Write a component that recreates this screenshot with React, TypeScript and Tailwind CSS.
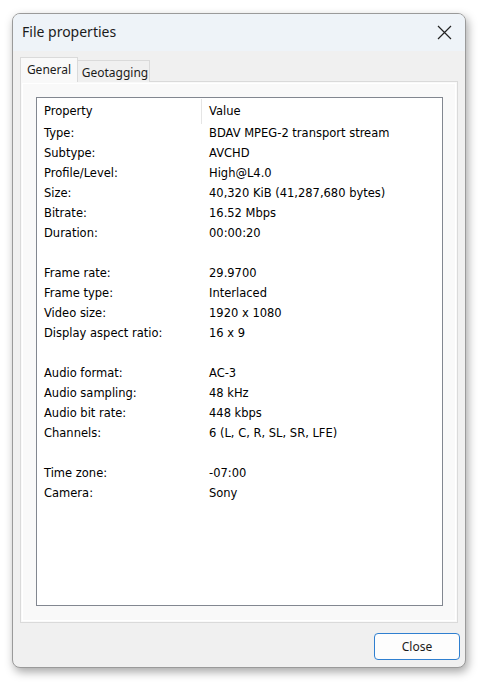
import React from "react";

const rows: ([string, string] | null)[] = [
  ["Type:", "BDAV MPEG-2 transport stream"],
  ["Subtype:", "AVCHD"],
  ["Profile/Level:", "High@L4.0"],
  ["Size:", "40,320 KiB (41,287,680 bytes)"],
  ["Bitrate:", "16.52 Mbps"],
  ["Duration:", "00:00:20"],
  null,
  ["Frame rate:", "29.9700"],
  ["Frame type:", "Interlaced"],
  ["Video size:", "1920 x 1080"],
  ["Display aspect ratio:", "16 x 9"],
  null,
  ["Audio format:", "AC-3"],
  ["Audio sampling:", "48 kHz"],
  ["Audio bit rate:", "448 kbps"],
  ["Channels:", "6 (L, C, R, SL, SR, LFE)"],
  null,
  ["Time zone:", "-07:00"],
  ["Camera:", "Sony"],
];

export default function App() {
  return (
    <div className="w-[485px] h-[688px] bg-white pt-[13px] pl-[12px]">
      <div className="w-[454px] h-[655px] rounded-[8px] border border-[#9a9a9a] bg-[#f0f0f0] shadow-[2px_4px_10px_rgba(0,0,0,0.35)] flex flex-col overflow-hidden">
        {/* title bar */}
        <div className="h-[37px] bg-[#eef3f8] flex items-center justify-between pl-[9px] pr-[13px] shrink-0">
          <span className="text-[14px] text-[#1b1b1b] font-['Noto_Sans',sans-serif] leading-none -mt-[2px]">File properties</span>
          <svg width="15" height="15" viewBox="0 0 15 15" className="-mt-[1px]">
            <path d="M1 1L14 14M14 1L1 14" stroke="#222" strokeWidth="1.2" />
          </svg>
        </div>
        <div className="flex-1 flex flex-col pt-[6px] px-[7px] pb-[8px]">
          {/* tabs */}
          <div className="flex items-end h-[25px] relative z-10 font-['Noto_Sans',sans-serif] text-[12px] text-[#1b1b1b]">
            <div className="h-[25px] w-[58px] bg-[#f9f9f9] border border-b-0 border-[#dadada] flex items-center justify-center">
              General
            </div>
            <div className="h-[22px] w-[72px] bg-[#f0f0f0] border border-l-0 border-b-0 border-[#dadada] flex items-center justify-center pt-[2px] pl-[3px]">
              Geotagging
            </div>
          </div>
          {/* panel */}
          <div className="h-[542px] -mt-[1px] border border-[#dadada] bg-[#f9f9f9] p-[1px]">
            <div className="h-full border border-white pt-[13px] pl-[13px] pr-[12px] pb-[14px]">
              <div className="h-full bg-white border border-[#828790] font-['DejaVu_Sans',sans-serif] text-[11.5px] text-[#000]">
                <div className="flex h-[26px] items-center pt-[1px]">
                  <div className="w-[165px] h-full pl-[7px] flex items-center border-r border-[#e5e5e5]">Property</div>
                  <div className="pl-[7px]">Value</div>
                </div>
                {rows.map((r, i) => (
                  <div key={i} className="flex h-[20px] items-center">
                    {r ? (
                      <>
                        <div className="w-[165px] pl-[7px]">{r[0]}</div>
                        <div className="pl-[7px]">{r[1]}</div>
                      </>
                    ) : null}
                  </div>
                ))}
              </div>
            </div>
          </div>
          <div className="flex justify-end mt-[10px]">
            <button className="w-[86px] h-[27px] -mr-[2px] rounded-[4px] border border-[#2f7fd0] bg-[#fdfdfd] text-[12px] font-['Noto_Sans',sans-serif] text-[#1b1b1b] flex items-center justify-center">
              Close
            </button>
          </div>
        </div>
      </div>
    </div>
  );
}
